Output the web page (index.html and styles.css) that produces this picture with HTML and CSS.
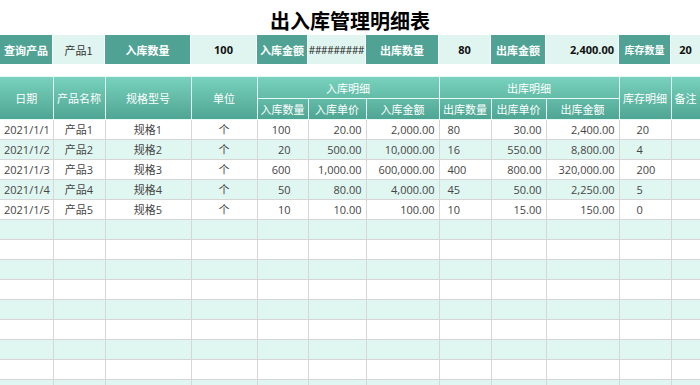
FILE: index.html
```html
<!DOCTYPE html>
<html lang="zh-CN">
<head>
<meta charset="utf-8">
<title>出入库管理明细表</title>
<link rel="stylesheet" href="styles.css">
</head>
<body>
<div class="sheet">
  <h1 class="title">出入库管理明细表</h1>
  <div class="query">
    <div class="q-label">查询产品</div>
    <div class="q-value q-plain">产品1</div>
    <div class="q-label">入库数量</div>
    <div class="q-value">100</div>
    <div class="q-label">入库金额</div>
    <div class="q-value q-hash">#########</div>
    <div class="q-label">出库数量</div>
    <div class="q-value">80</div>
    <div class="q-label">出库金额</div>
    <div class="q-value q-right">2,400.00</div>
    <div class="q-label q-small">库存数量</div>
    <div class="q-value">20</div>
  </div>
  <table class="detail">
    <colgroup>
      <col class="c53"><col class="c52"><col class="c86"><col class="c66">
      <col class="c51"><col class="c58"><col class="c73">
      <col class="c52"><col class="c55"><col class="c73">
      <col class="c52"><col class="c29">
    </colgroup>
    <thead>
      <tr class="h1">
        <th rowspan="2">日期</th>
        <th rowspan="2">产品名称</th>
        <th rowspan="2">规格型号</th>
        <th rowspan="2">单位</th>
        <th colspan="3">入库明细</th>
        <th colspan="3">出库明细</th>
        <th rowspan="2">库存明细</th>
        <th rowspan="2">备注</th>
      </tr>
      <tr class="h2">
        <th>入库数量</th>
        <th>入库单价</th>
        <th>入库金额</th>
        <th>出库数量</th>
        <th>出库单价</th>
        <th>出库金额</th>
      </tr>
    </thead>
    <tbody>
      <tr><td>2021/1/1</td><td>产品1</td><td>规格1</td><td>个</td><td class="r17">100</td><td class="r">20.00</td><td class="r">2,000.00</td><td class="l">80</td><td class="r">30.00</td><td class="r">2,400.00</td><td class="l17">20</td><td></td></tr>
      <tr><td>2021/1/2</td><td>产品2</td><td>规格2</td><td>个</td><td class="r17">20</td><td class="r">500.00</td><td class="r">10,000.00</td><td class="l">16</td><td class="r">550.00</td><td class="r">8,800.00</td><td class="l17">4</td><td></td></tr>
      <tr><td>2021/1/3</td><td>产品3</td><td>规格3</td><td>个</td><td class="r17">600</td><td class="r">1,000.00</td><td class="r">600,000.00</td><td class="l">400</td><td class="r">800.00</td><td class="r">320,000.00</td><td class="l17">200</td><td></td></tr>
      <tr><td>2021/1/4</td><td>产品4</td><td>规格4</td><td>个</td><td class="r17">50</td><td class="r">80.00</td><td class="r">4,000.00</td><td class="l">45</td><td class="r">50.00</td><td class="r">2,250.00</td><td class="l17">5</td><td></td></tr>
      <tr><td>2021/1/5</td><td>产品5</td><td>规格5</td><td>个</td><td class="r17">10</td><td class="r">10.00</td><td class="r">100.00</td><td class="l">10</td><td class="r">15.00</td><td class="r">150.00</td><td class="l17">0</td><td></td></tr>
      <tr><td></td><td></td><td></td><td></td><td></td><td></td><td></td><td></td><td></td><td></td><td></td><td></td></tr>
      <tr><td></td><td></td><td></td><td></td><td></td><td></td><td></td><td></td><td></td><td></td><td></td><td></td></tr>
      <tr><td></td><td></td><td></td><td></td><td></td><td></td><td></td><td></td><td></td><td></td><td></td><td></td></tr>
      <tr><td></td><td></td><td></td><td></td><td></td><td></td><td></td><td></td><td></td><td></td><td></td><td></td></tr>
      <tr><td></td><td></td><td></td><td></td><td></td><td></td><td></td><td></td><td></td><td></td><td></td><td></td></tr>
      <tr><td></td><td></td><td></td><td></td><td></td><td></td><td></td><td></td><td></td><td></td><td></td><td></td></tr>
      <tr><td></td><td></td><td></td><td></td><td></td><td></td><td></td><td></td><td></td><td></td><td></td><td></td></tr>
      <tr><td></td><td></td><td></td><td></td><td></td><td></td><td></td><td></td><td></td><td></td><td></td><td></td></tr>
      <tr><td></td><td></td><td></td><td></td><td></td><td></td><td></td><td></td><td></td><td></td><td></td><td></td></tr>
    </tbody>
  </table>
</div>
</body>
</html>
```
FILE: styles.css
```css
html, body {
  margin: 0;
  padding: 0;
  background: #fff;
}
body {
  font-family: "Open Sans", "Noto Sans CJK SC", sans-serif;
  font-size: 11px;
  color: #454545;
  overflow: hidden;
}
.sheet {
  width: 700px;
  height: 385px;
  overflow: hidden;
}
.title {
  margin: 0;
  height: 35px;
  box-sizing: border-box;
  padding-top: 8px;
  line-height: 26px;
  font-family: "Noto Sans CJK SC", sans-serif;
  font-size: 20px;
  font-weight: 700;
  color: #000;
  text-align: center;
}
.query {
  display: grid;
  grid-template-columns: 53px 52px 86px 66px 51px 58px 73px 52px 55px 73px 52px 29px;
  height: 29px;
}
.query > div {
  box-sizing: border-box;
  border-right: 1px solid #fff;
  display: flex;
  align-items: center;
  justify-content: center;
  font-weight: 700;
  white-space: nowrap;
  overflow: hidden;
}
.query > div:last-child {
  border-right: 0;
}
.q-label {
  background: #50a394;
  color: #fff;
  font-family: "Noto Sans CJK SC", sans-serif;
  font-size: 11px;
}
.q-small {
  font-size: 10px;
}
.q-value {
  background: #e0f5ef;
  color: #111;
  font-size: 11px;
}
.q-plain {
  font-weight: 400 !important;
  color: #333 !important;
  font-family: "Noto Sans CJK SC", sans-serif;
}
.q-hash {
  font-size: 10px;
  letter-spacing: -0.3px;
  font-weight: 400 !important;
  color: #222 !important;
}
.q-right {
  justify-content: flex-end !important;
  padding-right: 4px;
}
.detail {
  margin-top: 12px;
  width: 700px;
  table-layout: fixed;
  border-collapse: collapse;
  border-top: 1px solid #d2d2d2;
}
.c53 { width: 53px; }
.c52 { width: 52px; }
.c86 { width: 86px; }
.c66 { width: 66px; }
.c51 { width: 51px; }
.c58 { width: 58px; }
.c73 { width: 73px; }
.c55 { width: 55px; }
.c29 { width: 29px; }
.detail thead {
  background: linear-gradient(#78d2bd, #4ea492);
}
.detail th {
  font-family: "Noto Sans CJK SC", sans-serif;
  font-weight: 400;
  font-size: 11px;
  color: #fff;
  padding: 0;
  border: 1px solid rgba(210, 245, 236, 0.55);
  white-space: nowrap;
  overflow: hidden;
}
.detail th:first-child {
  border-left: 0;
}
.detail .h1 th {
  height: 21px;
}
.detail .h2 th {
  height: 20px;
}
.detail td {
  height: 19px;
  padding: 0 4px;
  border: 1px solid #d6d6d6;
  text-align: center;
  white-space: nowrap;
  overflow: hidden;
  font-size: 11px;
  line-height: 19px;
}
.detail td:first-child {
  border-left: 0;
}
.detail tbody tr:nth-child(even) td {
  background: #e0f6f0;
}
.detail td.r { text-align: right; }
.detail td.r17 { text-align: right; padding-right: 17px; }
.detail td.l { text-align: left; padding-left: 8px; }
.detail td.l17 { text-align: left; padding-left: 17px; }
```
